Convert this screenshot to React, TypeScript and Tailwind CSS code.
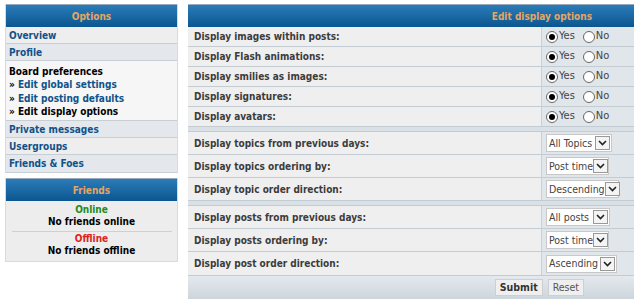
import React from "react";

const font = { fontFamily: '"DejaVu Sans Condensed", "DejaVu Sans", Verdana, sans-serif' };

function Radio({ checked }: { checked: boolean }) {
  return (
    <span className="inline-flex h-[12px] w-[12px] items-center justify-center rounded-full border border-[#666] bg-white">
      {checked && <span className="h-[6px] w-[6px] rounded-full bg-black" />}
    </span>
  );
}

function YesNo() {
  return (
    <div className="flex items-center text-[11px] text-[#444]">
      <Radio checked />
      <span className="ml-[1px]">Yes</span>
      <span className="ml-[8px] flex"><Radio checked={false} /></span>
      <span className="ml-[1px]">No</span>
    </div>
  );
}

function Select({ value, w }: { value: string; w: number }) {
  return (
    <div className="flex h-[18px] items-center border border-[#c8c8c8] bg-white text-[10.5px] text-[#444]" style={{ width: w }}>
      <span className="flex-1 whitespace-nowrap pl-[2px] leading-none">{value}</span>
      <span className="mr-[1px] flex h-[14px] w-[15px] shrink-0 items-center justify-center border border-[#999] bg-[#f4f4f4]">
        <svg width="9" height="6" viewBox="0 0 9 6"><path d="M1 1 L4.5 4.5 L8 1" fill="none" stroke="#222" strokeWidth="1.6" /></svg>
      </span>
    </div>
  );
}

function Row({ label, children, h }: { label: string; children: React.ReactNode; h: number }) {
  return (
    <div className="flex border-b border-[#c3cbd3]" style={{ height: h }}>
      <div className="flex flex-1 items-center border-r border-[#c8d0d8] bg-[#efefef] pl-[6px] text-[10px] font-bold text-[#3c3c3c]">{label}</div>
      <div className="flex w-[92px] items-center bg-[#e1e6eb] pl-[4px]">{children}</div>
    </div>
  );
}

function Header({ children, className = "" }: { children: React.ReactNode; className?: string }) {
  return (
    <div className={"flex h-[23px] items-center border-t border-[#9ab] bg-gradient-to-b from-[#2a7cb9] to-[#0a5690] text-[10px] font-bold text-[#e4a664] " + className}>
      {children}
    </div>
  );
}

export default function App() {
  const navRow = "flex h-[17px] items-center border-b border-[#c6ced6] pl-[3px] text-[10px] font-bold text-[#105289]";
  return (
    <div className="flex h-[300px] w-[640px] bg-white pt-[4px]" style={font}>
      <div className="ml-[5px] w-[173px]">
        <div className="border-x border-[#d6dbe0]">
          <Header className="justify-center">Options</Header>
          <div className={navRow + " bg-[#eeeeee]"}>Overview</div>
          <div className={navRow + " bg-[#e4e8ec]"}>Profile</div>
          <div className="flex h-[60px] flex-col justify-center border-b border-[#c6ced6] bg-[#f6f6f6] pl-[3px] pt-[2px] text-[10px] font-bold leading-[13.5px]">
            <div className="text-black">Board preferences</div>
            <div className="text-[#105289]"><span className="text-black">» </span>Edit global settings</div>
            <div className="text-[#105289]"><span className="text-black">» </span>Edit posting defaults</div>
            <div className="text-black">» Edit display options</div>
          </div>
          <div className={navRow + " bg-[#e4e8ec]"}>Private messages</div>
          <div className={navRow + " bg-[#eeeeee]"}>Usergroups</div>
          <div className={navRow + " h-[18px] bg-[#e4e8ec]"}>Friends &amp; Foes</div>
        </div>
        <div className="mt-[5px] border-x border-b border-[#d6dbe0] bg-[#ededed]">
          <Header className="justify-center">Friends</Header>
          <div className="flex flex-col items-center pt-[3px] text-[10px] font-bold leading-[12px]">
            <div className="text-[#228b22]">Online</div>
            <div className="text-black">No friends online</div>
            <div className="mt-[3px] w-[160px] border-t border-[#d0d0d0]" />
            <div className="mt-[1px] text-[#dd2222]">Offline</div>
            <div className="pb-[4px] text-black">No friends offline</div>
          </div>
        </div>
      </div>
      <div className="ml-[10px] w-[446px]">
        <Header className="justify-end pr-[42px]">Edit display options</Header>
        <Row label="Display images within posts:" h={20}><YesNo /></Row>
        <Row label="Display Flash animations:" h={20}><YesNo /></Row>
        <Row label="Display smilies as images:" h={20}><YesNo /></Row>
        <Row label="Display signatures:" h={20}><YesNo /></Row>
        <Row label="Display avatars:" h={20}><YesNo /></Row>
        <div className="h-[5px] border-b border-[#c3cbd3] bg-[#d9e0e6]" />
        <Row label="Display topics from previous days:" h={23}><Select value="All Topics" w={66} /></Row>
        <Row label="Display topics ordering by:" h={23}><Select value="Post time" w={63} /></Row>
        <Row label="Display topic order direction:" h={23}><Select value="Descending" w={73} /></Row>
        <div className="h-[5px] border-b border-[#c3cbd3] bg-[#d9e0e6]" />
        <Row label="Display posts from previous days:" h={23}><Select value="All posts" w={64} /></Row>
        <Row label="Display posts ordering by:" h={23}><Select value="Post time" w={63} /></Row>
        <Row label="Display post order direction:" h={24}><Select value="Ascending" w={71} /></Row>
        <div className="flex h-[23px] items-center justify-end gap-[5px] bg-gradient-to-b from-[#e4e9ee] to-[#cdd5dc] pr-[50px]">
          <span className="border border-[#cfcfcf] bg-[#efefef] px-[4px] text-[10.5px] font-bold leading-[15px] text-[#333]">Submit</span>
          <span className="border border-[#cfcfcf] bg-[#efefef] px-[4px] text-[10.5px] leading-[15px] text-[#555]">Reset</span>
        </div>
      </div>
    </div>
  );
}
